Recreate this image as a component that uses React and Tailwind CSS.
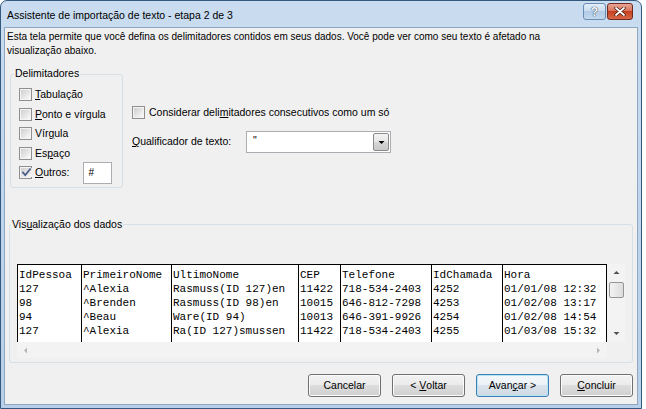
import React from 'react'

const sans = "font-['Liberation_Sans',Arial,sans-serif] text-[10px] text-black"
const mono = "font-['Liberation_Mono','Courier_New',monospace] text-[11px] leading-[14px] text-black"

const columns = [
  { w: 'w-[63px]', first: true },
  { w: 'w-[90px]' },
  { w: 'w-[127px]' },
  { w: 'w-[42px]' },
  { w: 'w-[91px]' },
  { w: 'w-[71px]' },
  { w: 'w-[104px]' },
]

const rows = [
  ['IdPessoa', 'PrimeiroNome', 'UltimoNome', 'CEP', 'Telefone', 'IdChamada', 'Hora'],
  ['127', '^Alexia', 'Rasmuss(ID 127)en', '11422', '718-534-2403', '4252', '01/01/08 12:32'],
  ['98', '^Brenden', 'Rasmuss(ID 98)en', '10015', '646-812-7298', '4253', '01/02/08 13:17'],
  ['94', '^Beau', 'Ware(ID 94)', '10013', '646-391-9926', '4254', '01/02/08 14:54'],
  ['127', '^Alexia', 'Ra(ID 127)smussen', '11422', '718-534-2403', '4255', '01/03/08 15:32'],
]

function Check({ checked }) {
  return (
    <span className="w-[13px] h-[13px] shrink-0 border border-[#8e8f8f] bg-[#f4f4f4] p-[1px] flex">
      <span className="flex-1 bg-linear-to-br from-[#cfcfcf] to-[#fafafa] flex items-center justify-center">
        {checked && (
          <svg width="11" height="11" viewBox="0 0 11 11">
            <path d="M2 5.5 L4.3 8.2 L9 2.2" fill="none" stroke="#4a5e8c" strokeWidth="1.8" strokeLinecap="square" />
          </svg>
        )}
      </span>
    </span>
  )
}

function Option({ checked, children }) {
  return (
    <div className="flex items-center gap-[3px] h-[13px]">
      <Check checked={checked} />
      <span className="leading-[13px] text-[10.5px]">{children}</span>
    </div>
  )
}

function Btn({ children, primary }) {
  return (
    <button
      className={
        primary
          ? 'w-[73px] h-[23px] rounded-[3px] border border-[#3c7fb1] bg-[linear-gradient(#f4f8fb,#ebf1f6_50%,#dbe4ec_50%,#cfd9e2)] shadow-[inset_0_0_0_1px_#b9e3f7] flex items-center justify-center whitespace-pre text-[10.5px]'
          : 'w-[73px] h-[23px] rounded-[3px] border border-[#707070] bg-[linear-gradient(#f2f2f2,#ebebeb_50%,#dddddd_50%,#cfcfcf)] shadow-[inset_0_0_0_1px_#fbfbfb] flex items-center justify-center whitespace-pre text-[10.5px]'
      }
    >
      {children}
    </button>
  )
}

function Tri({ dir, color }) {
  const d = {
    up: 'M0.5 4 L3.5 1 L6.5 4 Z',
    down: 'M0.5 1 L3.5 4 L6.5 1 Z',
    left: 'M4 0.5 L1 3.5 L4 6.5 Z',
    right: 'M1 0.5 L4 3.5 L1 6.5 Z',
  }[dir]
  const vert = dir === 'up' || dir === 'down'
  return (
    <svg width={vert ? 7 : 5} height={vert ? 5 : 7} viewBox={vert ? '0 0 7 5' : '0 0 5 7'}>
      <path d={d} fill={color} />
    </svg>
  )
}

export default function App() {
  return (
    <div className={`w-[646px] h-[409px] bg-white overflow-hidden ${sans}`}>
      <div className="w-[642px] h-[409px] rounded-t-[7px] border border-[#34597f] bg-linear-to-b from-[#c9dcf0] to-[#b7cfe8] flex flex-col">
        {/* title bar */}
        <div className="h-[26px] flex items-center justify-between pl-[6px] pr-[8px]">
          <span className="text-[10.5px] leading-[14px] pt-[1px]">Assistente de importação de texto - etapa 2 de 3</span>
          <div className="flex items-center gap-[1px] -mt-[5px]">
            <div className="w-[23px] h-[17px] rounded-[3px] border border-[#6c8db3] bg-[linear-gradient(#e2edf8,#c9dbee_50%,#b1cbe6_50%,#c2d8ee)] flex items-center justify-center">
              <span className="font-bold text-[12px] text-[#f6f8fb] [text-shadow:0_0_1px_#2c3e57,0_0_1px_#2c3e57]">?</span>
            </div>
            <div className="w-[26px] h-[17px] rounded-[3px] border border-[#6e2a1e] bg-[linear-gradient(#eaa696,#d96d55_50%,#c5401f_50%,#d8684a)] flex items-center justify-center">
              <svg width="12" height="9" viewBox="0 0 12 9">
                <path d="M2 1 L10 8 M10 1 L2 8" stroke="#3b1510" strokeWidth="3.2" strokeLinecap="round" />
                <path d="M2 1 L10 8 M10 1 L2 8" stroke="#ffffff" strokeWidth="1.8" strokeLinecap="round" />
              </svg>
            </div>
          </div>
        </div>

        {/* client area */}
        <div className="flex-1 mx-[3px] mb-[3px] border border-[#8ea7c2] bg-[#f0f0f0] flex flex-col">
          <p className="pt-[2px] pl-[2px] leading-[14px]">
            Esta tela permite que você defina os delimitadores contidos em seus dados. Você pode ver como seu texto é afetado na
            <br />
            visualização abaixo.
          </p>

          <div className="flex mt-[9px]">
            {/* Delimitadores */}
            <div className="relative ml-[5px] w-[113px] shrink-0 pt-[7px]">
              <div className="h-[114px] border border-[#d5dfe5] rounded-[3px] pt-[13px] pl-[8px] flex flex-col gap-[6.5px]">
                <Option><u>T</u>abulação</Option>
                <Option><u>P</u>onto e vírgula</Option>
                <Option>Vír<u>g</u>ula</Option>
                <Option>Es<u>p</u>aço</Option>
                <div className="flex items-center h-[13px]">
                  <Option checked><u>O</u>utros:</Option>
                  <div className="ml-[14px] w-[29px] h-[22px] border border-[#abadb3] bg-white flex items-center pl-[4px]">#</div>
                </div>
              </div>
              <span className="absolute left-[4px] top-0 px-[1px] bg-[#f0f0f0] leading-[13px] text-[10.5px]">Delimitadores</span>
            </div>

            {/* options at right */}
            <div className="ml-[9px] pt-[39px] flex flex-col text-[10.5px]">
              <div className="flex items-center gap-[4px] h-[13px]">
                <Check />
                <span>Considerar deli<u>m</u>itadores consecutivos como um só</span>
              </div>
              <div className="flex items-center mt-[12px]">
                <span className="w-[114px] shrink-0 whitespace-nowrap"><u>Q</u>ualificador de texto:</span>
                <div className="w-[145px] shrink-0 h-[22px] border border-[#abadb3] bg-white flex justify-between pl-[6px] pr-[1px] py-[1px]">
                  <span className="leading-[12px] pt-[1px]">"</span>
                  <div className="w-[16px] h-[18px] rounded-[2px] border border-[#8b8b8b] bg-[linear-gradient(#f3f3f3,#e6e6e6_50%,#d6d6d6_50%,#c9c9c9)] flex items-center justify-center">
                    <Tri dir="down" color="#000000" />
                  </div>
                </div>
              </div>
            </div>
          </div>

          {/* Visualização dos dados */}
          <div className="relative ml-[4px] w-[624px] mt-[30px] pt-[6px]">
            <div className="h-[139px] border border-[#d5dfe5] rounded-[3px] pt-[39px] pl-[7px]">
              <div className="w-[608px]">
                <div className="flex h-[78px]">
                  <div className={`w-[590px] border-l border-t border-r border-black bg-white flex overflow-hidden ${mono}`}>
                    {columns.map((c, ci) => (
                      <div key={ci} className={`${c.w} shrink-0 pt-[3px] pl-[1px] ${c.first ? '' : 'border-l border-black'} overflow-hidden`}>
                        {rows.map((r, ri) => (
                          <div key={ri} className="whitespace-pre h-[14px]">{r[ci]}</div>
                        ))}
                      </div>
                    ))}
                  </div>
                  <div className="w-[18px] bg-[#f3f3f3] flex flex-col items-center">
                    <div className="h-[17px] flex items-center justify-center">
                      <Tri dir="up" color="#505050" />
                    </div>
                    <div className="w-[15px] h-[16px] ml-[1px] mt-[1px] rounded-[2px] border border-[#959595] bg-linear-to-r from-[#f3f3f3] to-[#dcdcdc]" />
                    <div className="flex-1" />
                    <div className="h-[17px] flex items-center justify-center">
                      <Tri dir="down" color="#505050" />
                    </div>
                  </div>
                </div>
                <div className="w-[590px] h-[16px] bg-[#f3f3f3] flex items-center justify-between">
                  <div className="w-[17px] flex justify-center"><Tri dir="left" color="#b7b7b7" /></div>
                  <div className="w-[17px] flex justify-center"><Tri dir="right" color="#b7b7b7" /></div>
                </div>
              </div>
            </div>
            <span className="absolute left-[2px] top-0 px-[1px] bg-[#f0f0f0] leading-[13px] text-[10.5px]">Vis<u>u</u>alização dos dados</span>
          </div>

          {/* buttons */}
          <div className="flex justify-end gap-[11px] pr-[4px] mt-[11px]">
            <Btn>Cancelar</Btn>
            <Btn>{'< '}<u>V</u>oltar</Btn>
            <Btn primary>Avan<u>ç</u>ar{' >'}</Btn>
            <Btn><u>C</u>oncluir</Btn>
          </div>
        </div>
      </div>
    </div>
  )
}
